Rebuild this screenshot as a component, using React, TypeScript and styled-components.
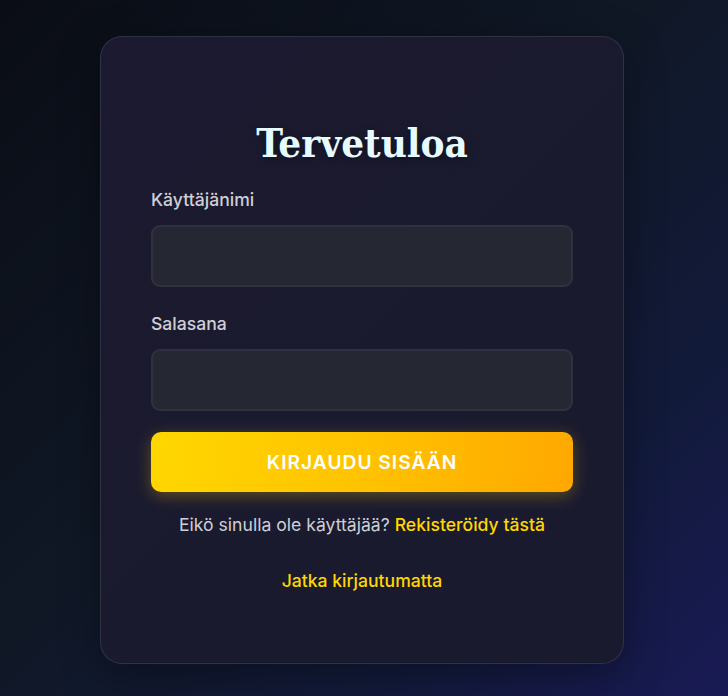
import React from "react";
import styled, { createGlobalStyle } from "styled-components";

const Global = createGlobalStyle`
  html, body { margin: 0; padding: 0; }
  body {
    font-family: Inter, "Noto Sans", sans-serif;
    background: #0b0f18;
  }
  * { box-sizing: border-box; }
`;

const Page = styled.div`
  min-height: 696px;
  padding-top: 4px;
  display: flex;
  align-items: center;
  justify-content: center;
  background: linear-gradient(135deg, #0a0d15 0%, #101826 45%, #121a3a 75%, #191a55 100%);
`;

const Card = styled.div`
  width: 524px;
  height: 628px;
  margin-right: 4px;
  padding: 50px 50px;
  border-radius: 22px;
  border: 1px solid rgba(255, 255, 255, 0.1);
  background: linear-gradient(135deg, #1b1a30 0%, #1a1a2e 100%);
  box-shadow: 0 10px 40px rgba(0, 0, 0, 0.35);
  display: flex;
  flex-direction: column;
`;

const Title = styled.h1`
  margin: 32px 0 20px;
  text-align: center;
  font-family: "DejaVu Serif Condensed", "DejaVu Serif", serif;
  font-stretch: condensed;
  font-weight: 700;
  font-size: 40px;
  line-height: 48px;
  color: #e6fbff;
  text-shadow: 0 2px 8px rgba(0, 0, 0, 0.4);
`;

const Field = styled.div<{ $mb: number }>`
  display: flex;
  flex-direction: column;
  margin-bottom: ${(p) => p.$mb}px;
`;

const Label = styled.label`
  font-size: 17.6px;
  line-height: 26px;
  font-weight: 500;
  color: #cfcfd6;
  margin-bottom: 12px;
`;

const Input = styled.input`
  height: 62px;
  width: 100%;
  border-radius: 9px;
  border: 2px solid #30313f;
  background: #252833;
  color: #fff;
  font-size: 16px;
  padding: 0 16px;
  outline: none;
`;

const Button = styled.button`
  height: 60px;
  width: 100%;
  border: none;
  border-radius: 10px;
  background: linear-gradient(100deg, #ffd700 0%, #ffc300 50%, #ffa800 100%);
  box-shadow: 0 4px 16px rgba(255, 200, 0, 0.3);
  color: #ffffff;
  font-family: Inter, sans-serif;
  font-weight: 600;
  font-size: 19.2px;
  letter-spacing: 1px;
  cursor: pointer;
`;

const Prompt = styled.p`
  margin: 20px 0 0;
  text-align: center;
  font-size: 17.6px;
  line-height: 26px;
  color: #cfcfd6;
`;

const Link = styled.a`
  color: #ffd700;
  font-weight: 500;
  text-decoration: none;
`;

const Guest = styled.p`
  margin: 30px 0 0;
  text-align: center;
  font-size: 17.6px;
  line-height: 26px;
`;

export default function App() {
  return (
    <>
      <Global />
      <Page>
        <Card>
          <Title>Tervetuloa</Title>
          <Field $mb={24}>
            <Label>Käyttäjänimi</Label>
            <Input type="text" />
          </Field>
          <Field $mb={21}>
            <Label>Salasana</Label>
            <Input type="password" />
          </Field>
          <Button>KIRJAUDU SISÄÄN</Button>
          <Prompt>
            Eikö sinulla ole käyttäjää? <Link href="#">Rekisteröidy tästä</Link>
          </Prompt>
          <Guest>
            <Link href="#">Jatka kirjautumatta</Link>
          </Guest>
        </Card>
      </Page>
    </>
  );
}
